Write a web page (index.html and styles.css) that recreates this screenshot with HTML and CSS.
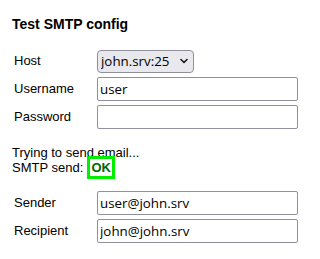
FILE: index.html
```html
<!DOCTYPE html>
<html>
<head>
<meta charset="utf-8">
<link rel="stylesheet" href="styles.css">
</head>
<body>
<div class="page">
  <h3 class="title">Test SMTP config</h3>
  <div class="form">
    <label class="lbl">Host</label>
    <div class="field">
      <span class="selwrap">
        <select class="sel"><option>john.srv:25</option></select>
        <svg class="chev" width="8" height="6" viewBox="0 0 8 6" aria-hidden="true"><path d="M1 1.5 L4 4.5 L7 1.5" fill="none" stroke="#1a1a1a" stroke-width="1.6" stroke-linecap="round" stroke-linejoin="round"/></svg>
      </span>
    </div>
    <label class="lbl">Username</label>
    <div class="field"><input class="inp" type="text" value="user"></div>
    <label class="lbl">Password</label>
    <div class="field"><input class="inp" type="password" value=""></div>
  </div>
  <div class="status">
    <div>Trying to send email...</div>
    <div>SMTP send: <span class="ok">OK</span></div>
  </div>
  <div class="form form2">
    <label class="lbl">Sender</label>
    <div class="field"><input class="inp" type="text" value="user@john.srv"></div>
    <label class="lbl">Recipient</label>
    <div class="field"><input class="inp" type="text" value="john@john.srv"></div>
  </div>
</div>
</body>
</html>
```
FILE: styles.css
```css
html, body {
  margin: 0;
  padding: 0;
  background: #ffffff;
}
body {
  font-family: "Liberation Sans", Arial, sans-serif;
  font-size: 13px;
  color: #000;
}
.page {
  padding: 16px 12px 0 12px;
}
.title {
  margin: 0;
  font-size: 14px;
  font-weight: bold;
  line-height: 16px;
}
.form {
  display: grid;
  grid-template-columns: 83px 201px;
  grid-auto-rows: 24px;
  row-gap: 4px;
  margin-top: 17px;
  padding-left: 2px;
  align-items: center;
}
.lbl {
  line-height: 16px;
}
.field {
  display: flex;
  align-items: center;
  height: 24px;
}
.selwrap {
  position: relative;
  display: inline-block;
  height: 23px;
}
.sel {
  -webkit-appearance: none;
  appearance: none;
  display: block;
  width: 97px;
  height: 23px;
  box-sizing: border-box;
  font-family: "Open Sans", "Noto Sans", sans-serif;
  font-size: 13.33px;
  color: #000;
  background: #e9e9ed;
  border: 1px solid #8f8f9d;
  border-radius: 4px;
  padding: 0 0 0 3px;
  margin: 0;
}
.chev {
  position: absolute;
  left: 83px;
  top: 8px;
  pointer-events: none;
}
.inp {
  width: 201px;
  height: 24px;
  box-sizing: border-box;
  font-family: "Open Sans", "Noto Sans", sans-serif;
  font-size: 13.33px;
  color: #000;
  border: 1px solid #8f8f9d;
  border-radius: 2px;
  padding: 1px 2px;
  margin: 0;
  background: #fff;
}
.status {
  margin-top: 16px;
}
.ok {
  border: 3px solid #00ee00;
  color: #006400;
  font-weight: bold;
  padding: 1px 1.5px;
}
.form2 {
  margin-top: 16px;
}
```
